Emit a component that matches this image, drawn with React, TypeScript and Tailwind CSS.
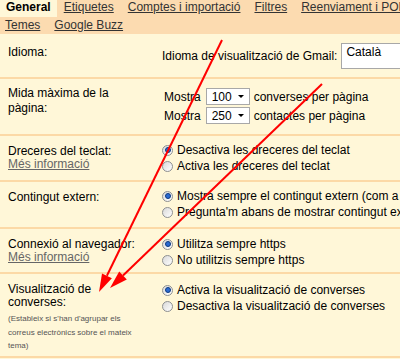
import type { ReactNode } from "react";

const Radio = ({ checked }: { checked?: boolean }) => (
  <span className="flex items-center justify-center w-[11px] h-[11px] shrink-0 rounded-full border border-[#8d8f91] bg-linear-to-br from-[#d9d9d9] to-white">
    {checked && (
      <span className="w-[6px] h-[6px] rounded-full bg-[#2b6bd1] border border-[#0e3a80]" />
    )}
  </span>
);

const Option = ({ checked, children }: { checked?: boolean; children: ReactNode }) => (
  <div className="flex items-center gap-[4px] h-[16px] whitespace-nowrap">
    <Radio checked={checked} />
    <span>{children}</span>
  </div>
);

const Select = ({ value }: { value: string }) => (
  <div className="flex items-center justify-between w-[44px] h-[17px] px-[5px] bg-white border border-[#a8a8a8] text-[12px]">
    <span>{value}</span>
    <span className="w-0 h-0 border-l-[3px] border-r-[3px] border-t-[3px] border-l-transparent border-r-transparent border-t-black" />
  </div>
);

const MoreInfo = () => (
  <a className="block text-[#666] underline leading-[13px]">Més informació</a>
);

interface RowProps {
  label: ReactNode;
  children: ReactNode;
  h: string;
  lpt: string;
  rpt: string;
}

const Row = ({ label, children, h, lpt, rpt }: RowProps) => (
  <div className={`grid grid-cols-[162px_1fr] border-b-2 border-[#fcd9a6] ${h}`}>
    <div className={`pl-[8px] w-[150px] ${lpt}`}>{label}</div>
    <div className={`${rpt} overflow-hidden`}>{children}</div>
  </div>
);

export default function App() {
  return (
    <div className="relative w-[400px] h-[359px] overflow-hidden bg-[#fff7d8] text-[12px] text-black font-['Liberation_Sans',Arial,sans-serif]">
      {/* Tabs */}
      <div className="bg-[#fcdbb0] h-[34px] whitespace-nowrap">
        <div className="flex h-[17px] leading-[15px]">
          <span className="px-[6px] bg-[#fff7d8] font-bold">General</span>
          <a className="px-[7px] underline text-[#333]">Etiquetes</a>
          <a className="px-[7px] underline text-[#333]">Comptes i importació</a>
          <a className="px-[7px] underline text-[#333]">Filtres</a>
          <a className="px-[7px] underline text-[#333]">Reenviament i POP/IMAP</a>
        </div>
        <div className="flex h-[17px] leading-[17px] pl-[-1px]">
          <a className="pl-[5px] pr-[7px] underline text-[#333]">Temes</a>
          <a className="px-[7px] underline text-[#333]">Google Buzz</a>
        </div>
      </div>

      <Row h="h-[45px]" lpt="pt-[11px] leading-[14px]" rpt="pt-[9px]" label="Idioma:">
        <div className="flex items-center whitespace-nowrap">
          <span>Idioma de visualització de Gmail:</span>
          <div className="ml-[4px] w-[90px] h-[26px] bg-white border border-[#a8a8a8] px-[4px] leading-[16px] shrink-0">
            Català
          </div>
        </div>
      </Row>

      <Row
        h="h-[57px]"
        lpt="pt-[7px] leading-[15px]"
        rpt="pt-[9px]"
        label={
          <>
            Mida màxima de la
            <br />
            pàgina:
          </>
        }
      >
        <div className="flex flex-col gap-[2px] whitespace-nowrap">
          <div className="flex items-center h-[17px]">
            <span className="pl-[2px] mr-[5px]">Mostra</span>
            <Select value="100" />
            <span className="ml-[4px]">converses per pàgina</span>
          </div>
          <div className="flex items-center h-[17px]">
            <span className="pl-[2px] mr-[5px]">Mostra</span>
            <Select value="250" />
            <span className="ml-[4px]">contactes per pàgina</span>
          </div>
        </div>
      </Row>

      <Row
        h="h-[46px]"
        lpt="pt-[8px] leading-[14px]"
        rpt="pt-[6px]"
        label={
          <>
            <div>Dreceres del teclat:</div>
            <MoreInfo />
          </>
        }
      >
        <Option checked>Desactiva les dreceres del teclat</Option>
        <Option>Activa les dreceres del teclat</Option>
      </Row>

      <Row h="h-[47px]" lpt="pt-[8px] leading-[14px]" rpt="pt-[6px]" label="Contingut extern:">
        <Option checked>Mostra sempre el contingut extern (com a missatges de confiança)</Option>
        <Option>Pregunta'm abans de mostrar contingut extern</Option>
      </Row>

      <Row
        h="h-[45px]"
        lpt="pt-[8px] leading-[14px]"
        rpt="pt-[7px]"
        label={
          <>
            <div>Connexió al navegador:</div>
            <MoreInfo />
          </>
        }
      >
        <Option checked>Utilitza sempre https</Option>
        <Option>No utilitzis sempre https</Option>
      </Row>

      <Row
        h="h-[84px]"
        lpt="pt-[9px] leading-[13px]"
        rpt="pt-[8px]"
        label={
          <>
            <div className="w-[140px]">Visualització de converses:</div>
            <p className="mt-[3px] w-[135px] text-[8px] leading-[13.5px] text-[#555]">
              (Estableix si s'han d'agrupar els correus electrònics sobre el mateix tema)
            </p>
          </>
        }
      >
        <div className="flex flex-col gap-[-1px]">
          <Option checked>Activa la visualització de converses</Option>
          <Option>Desactiva la visualització de converses</Option>
        </div>
      </Row>

      {/* Red annotation arrows */}
      <svg
        className="absolute inset-0 pointer-events-none"
        width="400"
        height="359"
        viewBox="0 0 400 359"
      >
        <line x1="222" y1="40" x2="106.9" y2="275.8" stroke="#f00" strokeWidth="2" />
        <polygon points="99,292 111.9,278.3 102,273.4" fill="#f00" />
        <line x1="322" y1="84" x2="123" y2="275.5" stroke="#f00" strokeWidth="2" />
        <polygon points="110,288 126.8,279.5 119.2,271.5" fill="#f00" />
      </svg>
    </div>
  );
}
